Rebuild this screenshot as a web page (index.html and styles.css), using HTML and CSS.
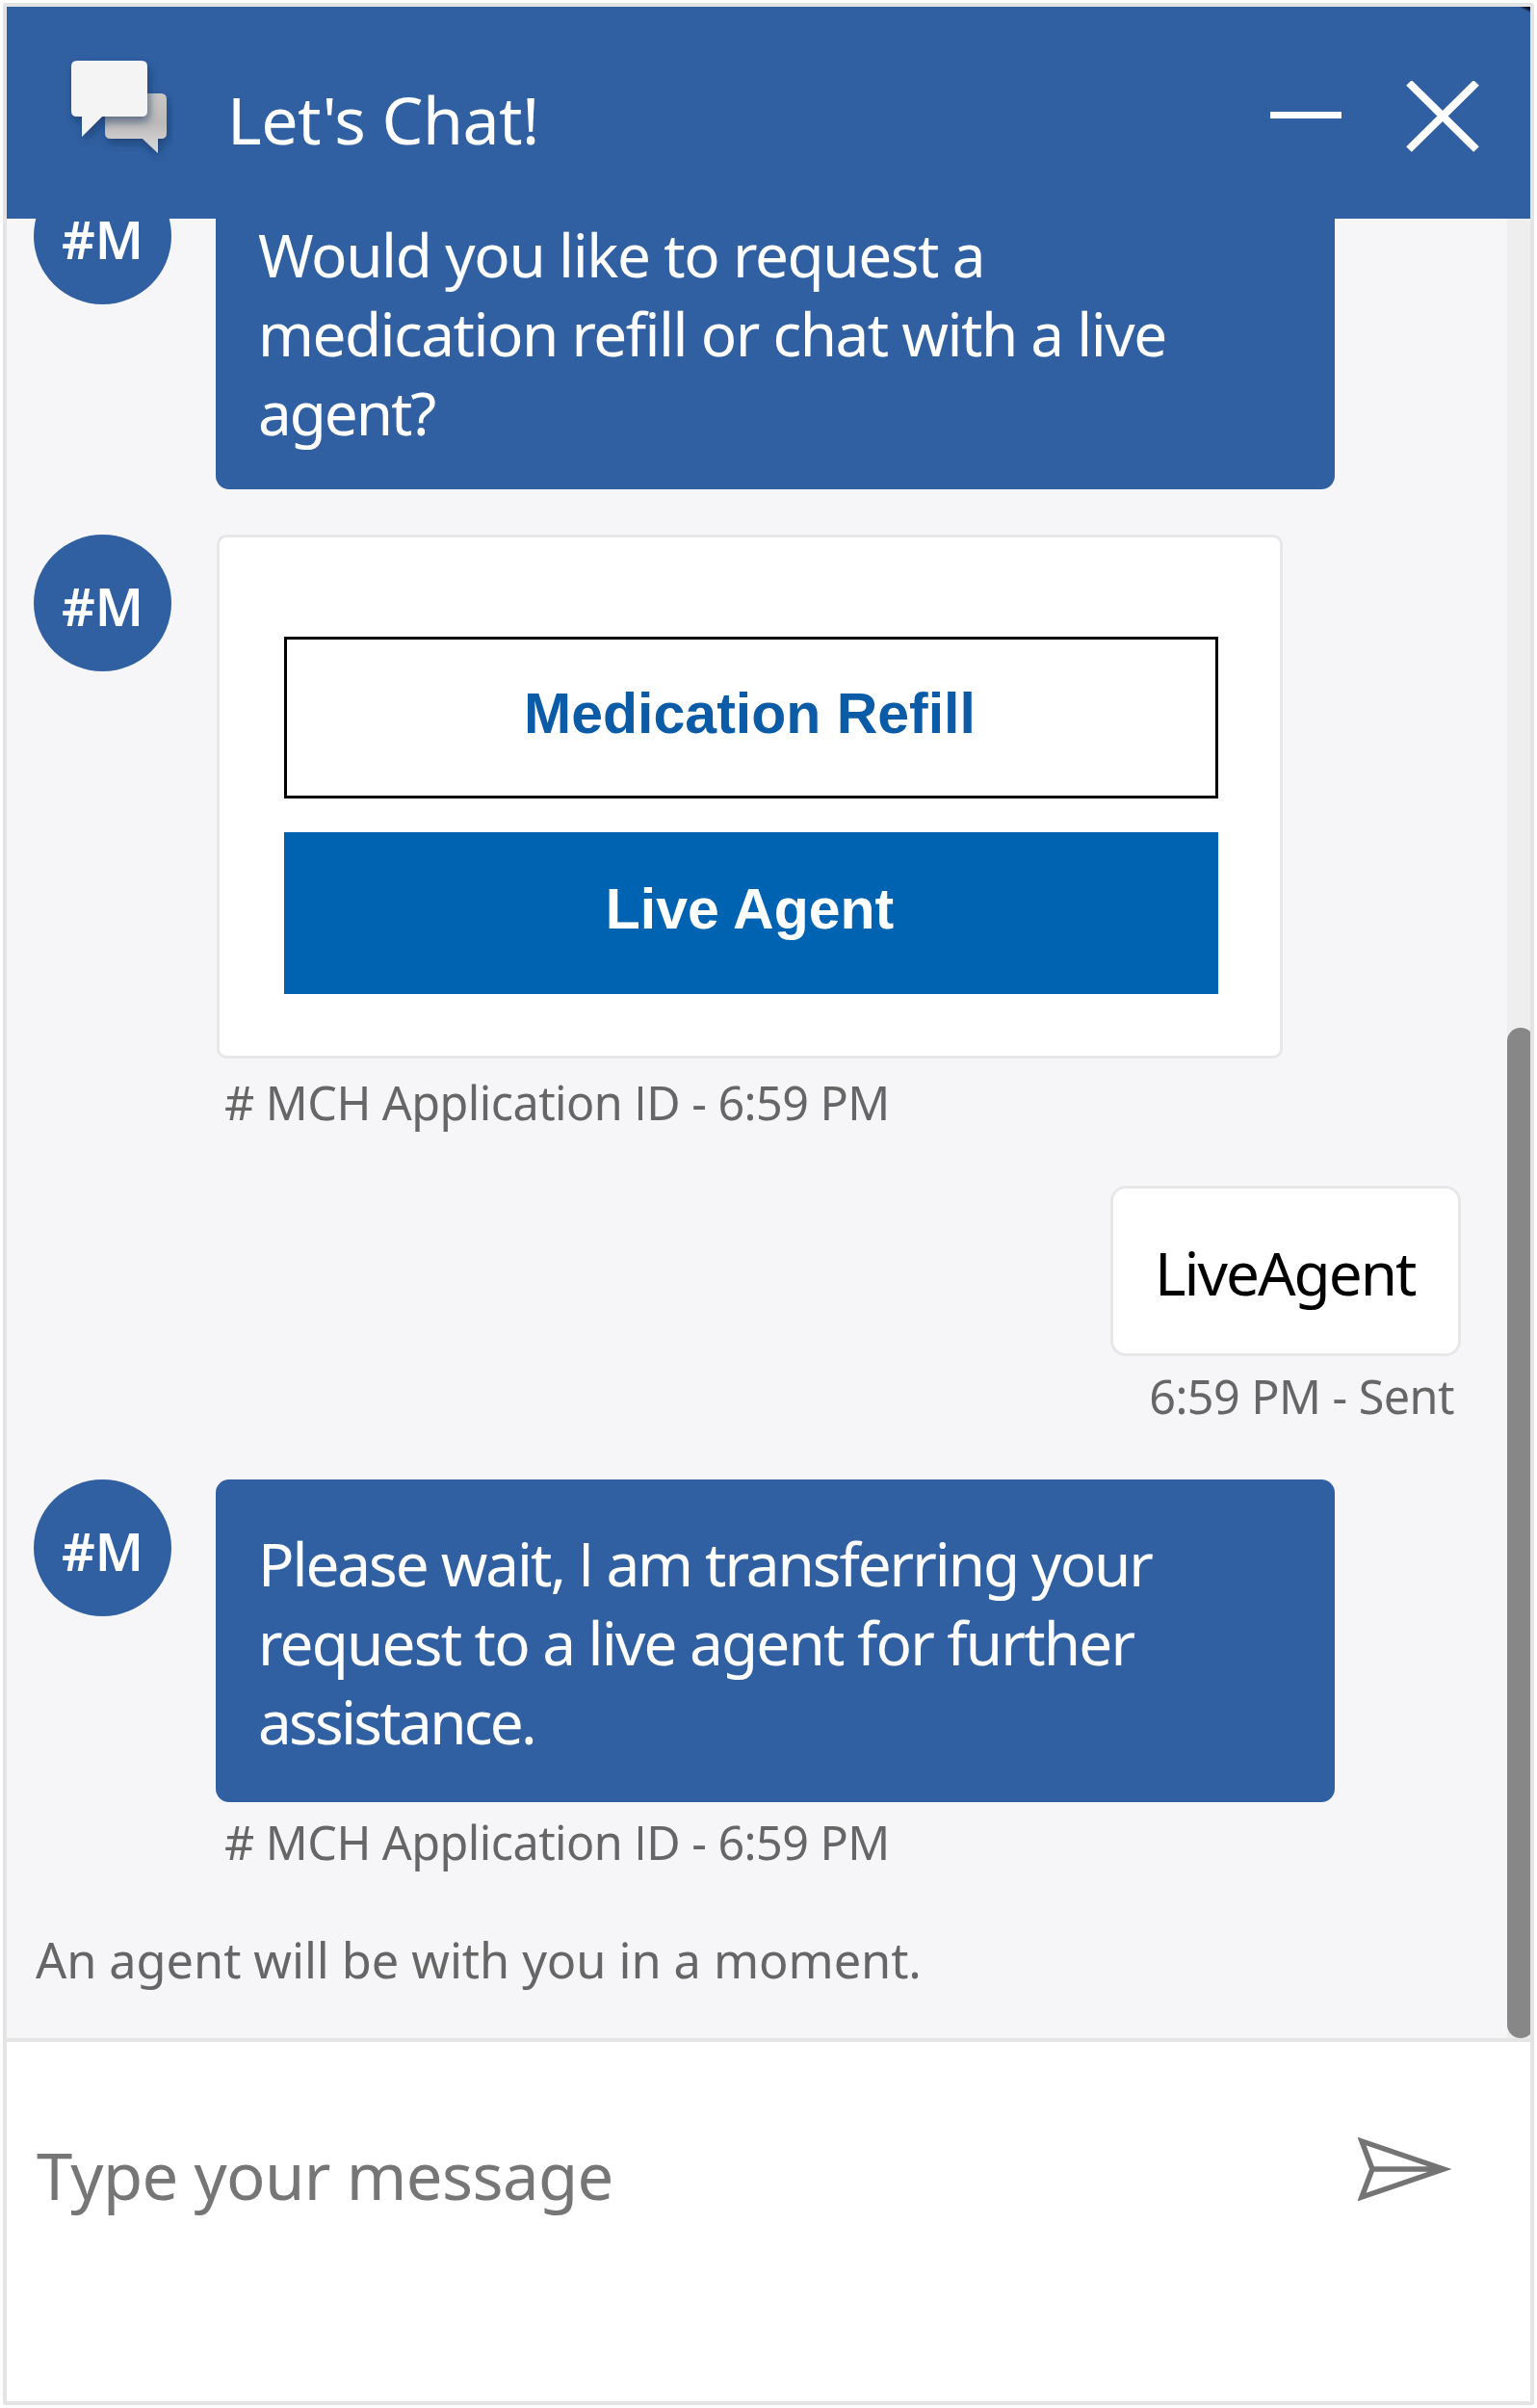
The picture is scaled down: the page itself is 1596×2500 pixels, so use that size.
FILE: index.html
```html
<!DOCTYPE html>
<html lang="en">
<head>
<meta charset="utf-8">
<title>Let's Chat!</title>
<link rel="stylesheet" href="styles.css">
</head>
<body>
<main class="widget">
  <header class="header">
    <svg class="logo" viewBox="0 0 120 120" width="120" height="120" aria-hidden="true">
      <defs>
        <linearGradient id="back" x1="0" y1="0" x2="0" y2="1">
          <stop offset="0" stop-color="#c9c6c6"/>
          <stop offset=".5" stop-color="#bdb9b9"/>
          <stop offset="1" stop-color="#dcdcdc"/>
        </linearGradient>
        <filter id="shade" x="-30%" y="-30%" width="160%" height="170%">
          <feDropShadow dx="2" dy="5" stdDeviation="5" flood-color="#12305f" flood-opacity=".6"/>
        </filter>
      </defs>
      <path filter="url(#shade)" fill="url(#back)" d="M55 47h52q6 0 6 6v35q0 6-6 6h-3v15L88 94H55q-6 0-6-6V53q0-6 6-6z"/>
      <path filter="url(#shade)" fill="#f5f4f4" d="M20 13h67q6 0 6 6v46q0 6-6 6H46L25 92V71h-5q-6 0-6-6V19q0-6 6-6z"/>
    </svg>
    <h1 class="title">Let's Chat!</h1>
    <div class="controls">
      <svg width="74" height="74" viewBox="0 0 74 74"><path d="M0 35.5h74" stroke="#fff" stroke-width="7"/></svg>
      <svg width="76" height="74" viewBox="0 0 76 74"><path d="M3 2l70 69M73 2L3 71" stroke="#fff" stroke-width="8"/></svg>
    </div>
    <span class="corner"></span>
  </header>

  <section class="conversation">
    <div class="messages">
      <div class="row row-first">
        <div class="avatar">#M</div>
        <div class="bubble bubble-question">Would you like to request a<br><span class="line-snug">medication refill or chat with a live</span><br><span class="line-tight">agent?</span></div>
      </div>

      <div class="row">
        <div class="avatar">#M</div>
        <div class="stack">
          <div class="card">
            <button class="choice">Medication Refill</button>
            <button class="choice choice-primary">Live Agent</button>
          </div>
          <div class="meta meta-card"># MCH Application <span class="cap-i">I</span>D - 6:59 PM</div>
        </div>
      </div>

      <div class="row row-sent">
        <div class="sent">LiveAgent</div>
        <div class="meta meta-sent">6:59 PM - Sent</div>
      </div>

      <div class="row">
        <div class="avatar">#M</div>
        <div class="stack">
          <div class="bubble bubble-reply"><span class="line-tight">Please wait, <span class="cap-i">I</span> am transferring your</span><br>request to a live agent for further<br><span class="line-tightest">assistance.</span></div>
          <div class="meta"># MCH Application <span class="cap-i">I</span>D - 6:59 PM</div>
        </div>
      </div>

      <div class="status">An agent will be with you in a moment.</div>
    </div>
    <div class="track"><div class="thumb"></div></div>
  </section>

  <footer class="composer">
    <div class="placeholder">Type your message</div>
    <svg class="send" width="100" height="70" viewBox="0 0 100 70">
      <path d="M4 6L89 35L4 64L15 35zM15 35H89" fill="none" stroke="#747474" stroke-width="5.5"/>
    </svg>
  </footer>
</main>
</body>
</html>
```
FILE: styles.css
```css
* {
  box-sizing: border-box;
}

body {
  margin: 0;
  background: #fff;
  font-family: "Noto Sans", "Open Sans", sans-serif;
}

.widget {
  display: flex;
  flex-direction: column;
  width: 1590px;
  height: 2494px;
  margin: 3px;
  border: 4px solid #e4e4e4;
  border-radius: 3px;
  background: #fff;
}

.header {
  position: relative;
  display: flex;
  flex: none;
  align-items: flex-start;
  height: 220px;
  padding-left: 53px;
  background: #3160a2;
  color: #fff;
}

.logo {
  flex: none;
  margin-top: 43px;
}

.title {
  margin: 72px 0 0 56px;
  font-size: 68px;
  font-weight: 400;
  line-height: 90px;
  letter-spacing: -0.5px;
  white-space: nowrap;
}

.controls {
  display: flex;
  gap: 67px;
  margin: 77px 53px 0 auto;
}

.corner {
  position: absolute;
  top: 0;
  right: 0;
  width: 12px;
  height: 6px;
  background: linear-gradient(to top right, transparent 45%, #0b1424 75%);
}

.conversation {
  display: flex;
  flex: none;
  height: 1889px;
  overflow: hidden;
  background: #f6f6f9;
}

.messages {
  display: flex;
  flex: 1;
  flex-direction: column;
  gap: 57px;
  margin-top: -53px;
  padding-left: 28px;
}

.row {
  display: flex;
  align-items: flex-start;
}

.row-first {
  margin-bottom: -10px;
}

.avatar {
  flex: none;
  width: 143px;
  height: 142px;
  margin-right: 46px;
  padding-top: 3px;
  border-radius: 50%;
  background: #3160a2;
  color: #fff;
  font-size: 54px;
  font-weight: 600;
  line-height: 142px;
  text-align: center;
}

.bubble {
  width: 1162px;
  padding-left: 44px;
  border-radius: 14px;
  background: #3160a2;
  color: #fff;
  font-size: 62px;
  line-height: 82px;
  white-space: nowrap;
}

.bubble-question {
  padding-top: 49px;
  padding-bottom: 39px;
  letter-spacing: -1.4px;
}

.bubble-reply {
  padding-top: 46px;
  padding-bottom: 43px;
  letter-spacing: -1.8px;
}

.line-snug {
  letter-spacing: -1.5px;
}

.line-tight {
  letter-spacing: -2.05px;
}

.line-tightest {
  letter-spacing: -2.7px;
}

.cap-i {
  font-family: "Open Sans", sans-serif;
  line-height: 1;
}

.card {
  display: flex;
  flex-direction: column;
  gap: 35px;
  width: 1107px;
  height: 544px;
  padding: 103px 64px 0 67px;
  border: 3px solid #e7e7e9;
  border-radius: 10px;
  background: #fff;
  margin-left: 1px;
}

.choice {
  height: 168px;
  padding: 0 3px 8px 0;
  border: 3.5px solid #000;
  border-radius: 0;
  background: #fff;
  color: #0b5ba7;
  font: 700 59px "Liberation Sans", Arial, sans-serif;
}

.choice-primary {
  border-color: #0063b1;
  background: #0063b1;
  color: #fff;
}

.meta {
  margin: 11px 0 0 9px;
  color: #666;
  font-size: 48.5px;
  line-height: 60px;
  letter-spacing: -0.55px;
  white-space: nowrap;
}

.meta-card {
  margin-top: 15px;
}

.row-sent {
  flex-direction: column;
  align-items: flex-end;
  padding-right: 48px;
}

.sent {
  width: 364px;
  height: 177px;
  padding: 46px 0 0 43px;
  border: 3px solid #e7e7e9;
  border-radius: 16px;
  background: #fff;
  color: #000;
  font-size: 62px;
  line-height: 82px;
  letter-spacing: -2px;
}

.meta-sent {
  margin-right: 7px;
}

.status {
  color: #666;
  font-size: 50.5px;
  line-height: 72px;
  letter-spacing: -0.08px;
  margin-left: 2px;
  white-space: nowrap;
}

.track {
  flex: none;
  width: 24px;
  height: 1889px;
  padding-top: 840px;
  overflow: hidden;
  background: #eee;
}

.thumb {
  width: 28px;
  height: 1049px;
  border-radius: 14px;
  background: #878787;
}

.composer {
  display: flex;
  flex: 1;
  align-items: flex-start;
  justify-content: space-between;
  padding: 93px 79px 0 31px;
  border-top: 4px solid #e5e5e5;
}

.placeholder {
  color: #767676;
  font-size: 67px;
  line-height: 90px;
  letter-spacing: -0.6px;
}

.send {
  margin-top: 4px;
}
```
